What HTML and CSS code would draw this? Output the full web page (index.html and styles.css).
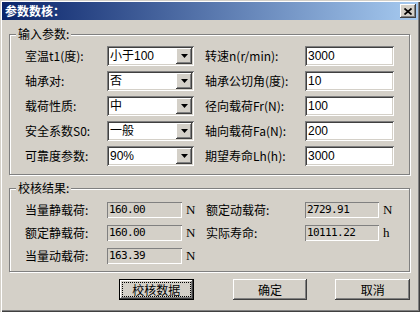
FILE: index.html
```html
<!DOCTYPE html>
<html lang="zh">
<head>
  <meta charset="UTF-8" />
  <title>参数数核</title>
  <link rel="stylesheet" href="styles.css">
</head>
<body>

<div class="window">
  <div class="titlebar">
    <span class="title">参数数核：</span>
    <button class="close">
      <svg width="8" height="7" viewBox="0 0 8 7"><path d="M0.5 0.5 L7.5 6.5 M7.5 0.5 L0.5 6.5" stroke="#000" stroke-width="1.7" fill="none"/></svg>
    </button>
  </div>

  <div class="content">
    <!-- 输入参数 -->
    <div class="group group-input">
      <div class="legend">输入参数:</div>
      <div class="input-grid">
        <div class="lbl">室温t1(度):</div>
        <div class="combo"><span class="val">小于100</span><span class="drop"><svg width="7" height="4" viewBox="0 0 7 4"><polygon points="0,0 7,0 3.5,4" fill="#000"/></svg></span></div>
        <div class="lbl lbl-r">转速n(r/min):</div>
        <input class="field" type="text" value="3000" />

        <div class="lbl">轴承对:</div>
        <div class="combo"><span class="val">否</span><span class="drop"><svg width="7" height="4" viewBox="0 0 7 4"><polygon points="0,0 7,0 3.5,4" fill="#000"/></svg></span></div>
        <div class="lbl lbl-r">轴承公切角(度):</div>
        <input class="field" type="text" value="10" />

        <div class="lbl">载荷性质:</div>
        <div class="combo"><span class="val">中</span><span class="drop"><svg width="7" height="4" viewBox="0 0 7 4"><polygon points="0,0 7,0 3.5,4" fill="#000"/></svg></span></div>
        <div class="lbl lbl-r">径向载荷Fr(N):</div>
        <input class="field" type="text" value="100" />

        <div class="lbl">安全系数S0:</div>
        <div class="combo"><span class="val">一般</span><span class="drop"><svg width="7" height="4" viewBox="0 0 7 4"><polygon points="0,0 7,0 3.5,4" fill="#000"/></svg></span></div>
        <div class="lbl lbl-r">轴向载荷Fa(N):</div>
        <input class="field" type="text" value="200" />

        <div class="lbl">可靠度参数:</div>
        <div class="combo"><span class="val">90%</span><span class="drop"><svg width="7" height="4" viewBox="0 0 7 4"><polygon points="0,0 7,0 3.5,4" fill="#000"/></svg></span></div>
        <div class="lbl lbl-r">期望寿命Lh(h):</div>
        <input class="field" type="text" value="3000" />
      </div>
    </div>

    <!-- 校核结果 -->
    <div class="group group-result">
      <div class="legend">校核结果:</div>
      <div class="result-grid">
        <div class="lbl">当量静载荷:</div>
        <div class="out">160.00</div>
        <div class="unit">N</div>
        <div class="lbl">额定动载荷:</div>
        <div class="out">2729.91</div>
        <div class="unit">N</div>

        <div class="lbl">额定静载荷:</div>
        <div class="out">160.00</div>
        <div class="unit">N</div>
        <div class="lbl">实际寿命:</div>
        <div class="out">10111.22</div>
        <div class="unit">h</div>

        <div class="lbl">当量动载荷:</div>
        <div class="out">163.39</div>
        <div class="unit">N</div>
      </div>
    </div>

    <div class="buttons">
      <button class="btn btn-default"><span class="focus">校核数据</span></button>
      <button class="btn btn-ok">确定</button>
      <button class="btn btn-cancel">取消</button>
    </div>
  </div>
</div>

</body>
</html>
```

FILE: styles.css
```css
* {
  box-sizing: border-box;
}
body {
  margin: 0;
  background: #d4d0c8;
  font-family: "Noto Sans CJK SC", "DejaVu Sans", sans-serif;
  font-size: 12px;
  color: #000;
}

.window {
  width: 420px;
  height: 312px;
  padding: 2px;
  background: #d4d0c8;
  box-shadow: inset 1px 1px #d4d0c8, inset 2px 2px #fff, inset -1px -1px #404040, inset -2px -2px #808080;
}

.titlebar {
  height: 18px;
  display: flex;
  align-items: center;
  justify-content: space-between;
  padding: 0 2px 0 3px;
  background: linear-gradient(to right, #0a246a, #a6caf0);
}
.title {
  color: #fff;
  font-weight: bold;
  font-size: 12px;
  line-height: 18px;
}
.close {
  width: 16px;
  height: 14px;
  padding: 0;
  border: none;
  background: #d4d0c8;
  display: flex;
  align-items: center;
  justify-content: center;
  box-shadow: inset -1px -1px #404040, inset 1px 1px #fff, inset -2px -2px #808080;
}

.content {
  padding: 14px 8px 0 7px;
}

/* etched group box */
.group {
  position: relative;
  border: 1px solid #808080;
  box-shadow: inset 1px 1px #fff, 1px 1px #fff;
}
.legend {
  position: absolute;
  top: -8px;
  left: 6px;
  padding: 0 2px;
  line-height: 14px;
  background: #d4d0c8;
}

.group-input {
  height: 141px;
  padding: 11px 0 0 15px;
}
.input-grid {
  display: grid;
  grid-template-columns: 82px 87px 111px 89px;
  grid-auto-rows: 20px;
  row-gap: 5px;
  align-items: center;
}
.lbl {
  line-height: 20px;
  white-space: nowrap;
}
.lbl-r {
  padding-left: 11px;
}

.combo {
  height: 20px;
  display: flex;
  padding: 2px;
  background: #fff;
  box-shadow: inset 1px 1px #808080, inset -1px -1px #fff, inset 2px 2px #404040, inset -2px -2px #d4d0c8;
}
.combo .val {
  flex: 1;
  padding-left: 1px;
  line-height: 16px;
  font-family: "Liberation Sans", "Noto Sans CJK SC", sans-serif;
}
.drop {
  width: 16px;
  height: 16px;
  display: flex;
  align-items: center;
  justify-content: center;
  background: #d4d0c8;
  box-shadow: inset -1px -1px #404040, inset 1px 1px #fff, inset -2px -2px #808080;
}

.field {
  width: 89px;
  height: 20px;
  margin: 0;
  padding: 0 2px 0 3px;
  border: none;
  outline: none;
  background: #fff;
  font-family: "Liberation Sans", sans-serif;
  font-size: 12px;
  color: #000;
  box-shadow: inset 1px 1px #808080, inset -1px -1px #fff, inset 2px 2px #404040, inset -2px -2px #d4d0c8;
}

.group-result {
  height: 84px;
  margin-top: 13px;
  padding: 13px 0 0 15px;
}
.result-grid {
  display: grid;
  grid-template-columns: 82px 75px 24px 99px 74px auto;
  grid-auto-rows: 16px;
  row-gap: 7px;
  align-items: center;
}
.result-grid .lbl {
  line-height: 16px;
}
.out {
  height: 16px;
  padding-left: 2px;
  line-height: 15px;
  font-family: "DejaVu Sans Mono", monospace;
  font-size: 11px;
  letter-spacing: -0.6px;
  box-shadow: inset 1px 1px #808080, inset -1px -1px #fff;
}
.unit {
  padding-left: 4px;
  font-family: "Liberation Serif", serif;
  font-size: 13px;
  line-height: 16px;
}

.buttons {
  display: flex;
  margin-top: 7px;
  padding-left: 110px;
}
.btn {
  width: 75px;
  height: 21px;
  padding: 0;
  border: none;
  background: #d4d0c8;
  font-family: "Noto Sans CJK SC", sans-serif;
  font-size: 12px;
  color: #000;
  box-shadow: inset -1px -1px #404040, inset 1px 1px #fff, inset -2px -2px #808080;
}
.btn-default {
  display: flex;
  padding: 3px;
  box-shadow: inset 0 0 0 1px #000, inset -2px -2px #404040, inset 2px 2px #fff, inset -3px -3px #808080;
}
.focus {
  flex: 1;
  display: flex;
  align-items: center;
  justify-content: center;
  border: 1px dotted #000;
}
.btn-ok {
  margin-left: 39px;
}
.btn-cancel {
  margin-left: 28px;
}
```
